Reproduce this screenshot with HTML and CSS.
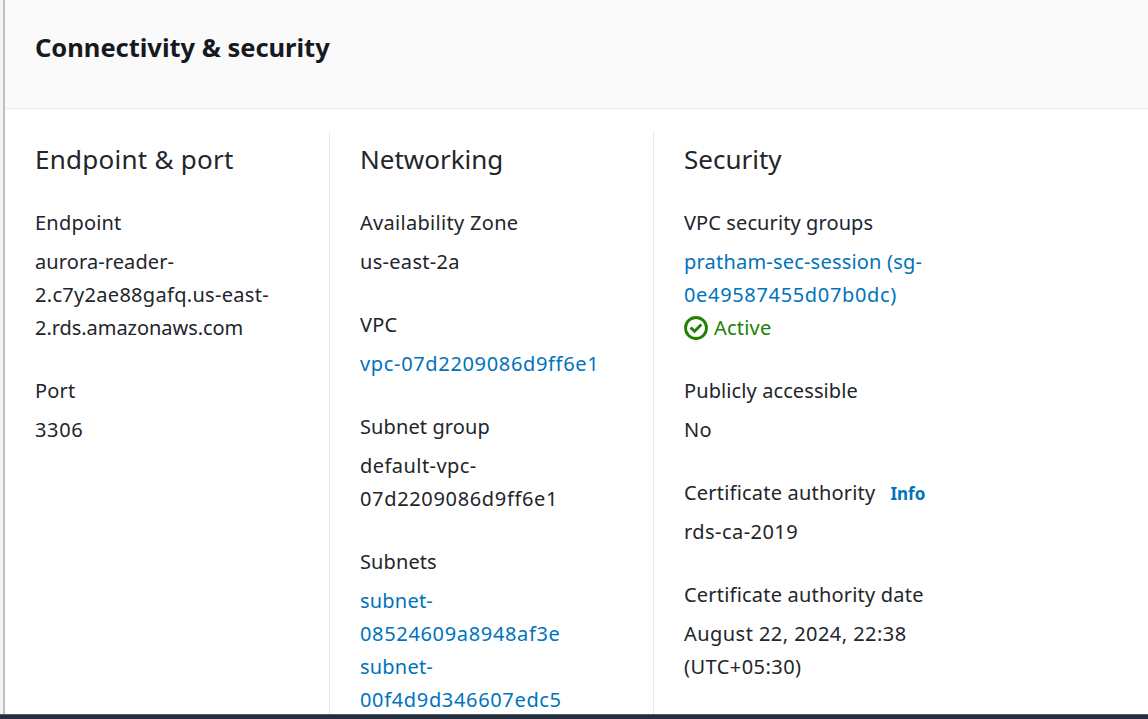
FILE: index.html
```html
<!DOCTYPE html>
<html lang="en">
<head>
<meta charset="utf-8">
<title>Connectivity &amp; security</title>
<link rel="stylesheet" href="styles.css">
</head>
<body>
<div class="page">
  <main class="panel">
    <header class="panel-header"><h2 class="panel-title">Connectivity &amp; security</h2></header>
    <div class="columns">
      <section class="column">
        <h3 class="column-title title-wide">Endpoint &amp; port</h3>
        <div class="field"><div class="label">Endpoint</div><div class="value"><span class="tight">aurora-reader-</span><br><span class="mixed">2.c7y2ae88gafq.us-east-</span><br><span class="plain">2.rds.amazonaws.com</span></div></div>
        <div class="field"><div class="label">Port</div><div class="value digits">3306</div></div>
      </section>
      <section class="column">
        <h3 class="column-title">Networking</h3>
        <div class="field"><div class="label mixed">Availability Zone</div><div class="value mixed">us-east-2a</div></div>
        <div class="field"><div class="label">VPC</div><div class="value link digits">vpc-07d2209086d9ff6e1</div></div>
        <div class="field"><div class="label tight">Subnet group</div><div class="value"><span class="medium">default-vpc-</span><br><span class="digits">07d2209086d9ff6e1</span></div></div>
        <div class="field"><div class="label tight">Subnets</div><div class="value link"><span>subnet-</span><br><span class="digits">08524609a8948af3e</span><br><span>subnet-</span><br><span class="digits">00f4d9d346607edc5</span></div></div>
      </section>
      <section class="column">
        <h3 class="column-title">Security</h3>
        <div class="field"><div class="label tight">VPC security groups</div><div class="value"><span class="link">pratham-sec-session (sg-<br><span class="digits">0e49587455d07b0dc)</span></span>
          <div class="status"><svg class="status-icon" viewBox="0 0 24 24" fill="none" stroke="currentColor" stroke-width="2.8"><circle cx="12" cy="12" r="10.5"/><path d="M6.6 11.4l4 3.9 6.7-6.7"/></svg>Active</div></div></div>
        <div class="field"><div class="label tight">Publicly accessible</div><div class="value">No</div></div>
        <div class="field"><div class="label">Certificate authority<span class="info">Info</span></div><div class="value medium">rds-ca-2019</div></div>
        <div class="field"><div class="label">Certificate authority date</div><div class="value medium">August 22, 2024, 22:38<br>(UTC+05:30)</div></div>
      </section>
    </div>
  </main>
  <footer class="footer"></footer>
</div>
</body>
</html>
```
FILE: styles.css
```css
* { box-sizing: border-box; }
body { margin: 0; overflow: hidden; background: #f2f3f3; font-family: "Noto Sans", sans-serif; font-size: 20px; line-height: 33px; letter-spacing: 0.2px; color: #22252b; }
.page { height: 719px; display: flex; flex-direction: column; overflow: hidden; }
.panel { flex: 1; min-height: 0; margin-left: 3px; border-left: 2px solid #b9c2c6; background: #fff; overflow: hidden; }
.panel-header { height: 109px; padding: 29px 30px 0; background: #fafafa; border-bottom: 1px solid #eaeded; }
.panel-title { margin: 0; font-size: 25.5px; line-height: 36px; font-weight: 700; letter-spacing: -0.02px; color: #16191f; }
.columns { display: grid; grid-template-columns: 325px 324px 324px; padding-top: 23px; }
.column { height: 640px; padding: 9px 20px 0 30px; white-space: nowrap; border-right: 1px solid #e6e8e9; }
.column:last-child { border-right: 0; }
.column-title { margin: 0 0 29px; font-size: 26px; line-height: 36px; font-weight: 400; letter-spacing: 0; }
.title-wide { letter-spacing: 0.25px; }
.field { margin-bottom: 30px; }
.label { margin-bottom: 6px; }
.link { color: #0073bb; }

/* Tracking steps */
.plain { letter-spacing: -0.05px; }
.tight { letter-spacing: 0.1px; }
.mixed { letter-spacing: 0.3px; }
.medium { letter-spacing: 0.45px; }
.digits { letter-spacing: 0.66px; }

.info { margin-left: 15px; font-size: 17px; line-height: 1; font-weight: 700; letter-spacing: 0; color: #0073bb; }
.status { display: flex; align-items: center; gap: 6px; color: #1d8102; }
.status-icon { width: 24px; height: 24px; }
.footer { height: 5px; flex: none; background: #232f3e; border-top: 1px solid #545b64; }
```
